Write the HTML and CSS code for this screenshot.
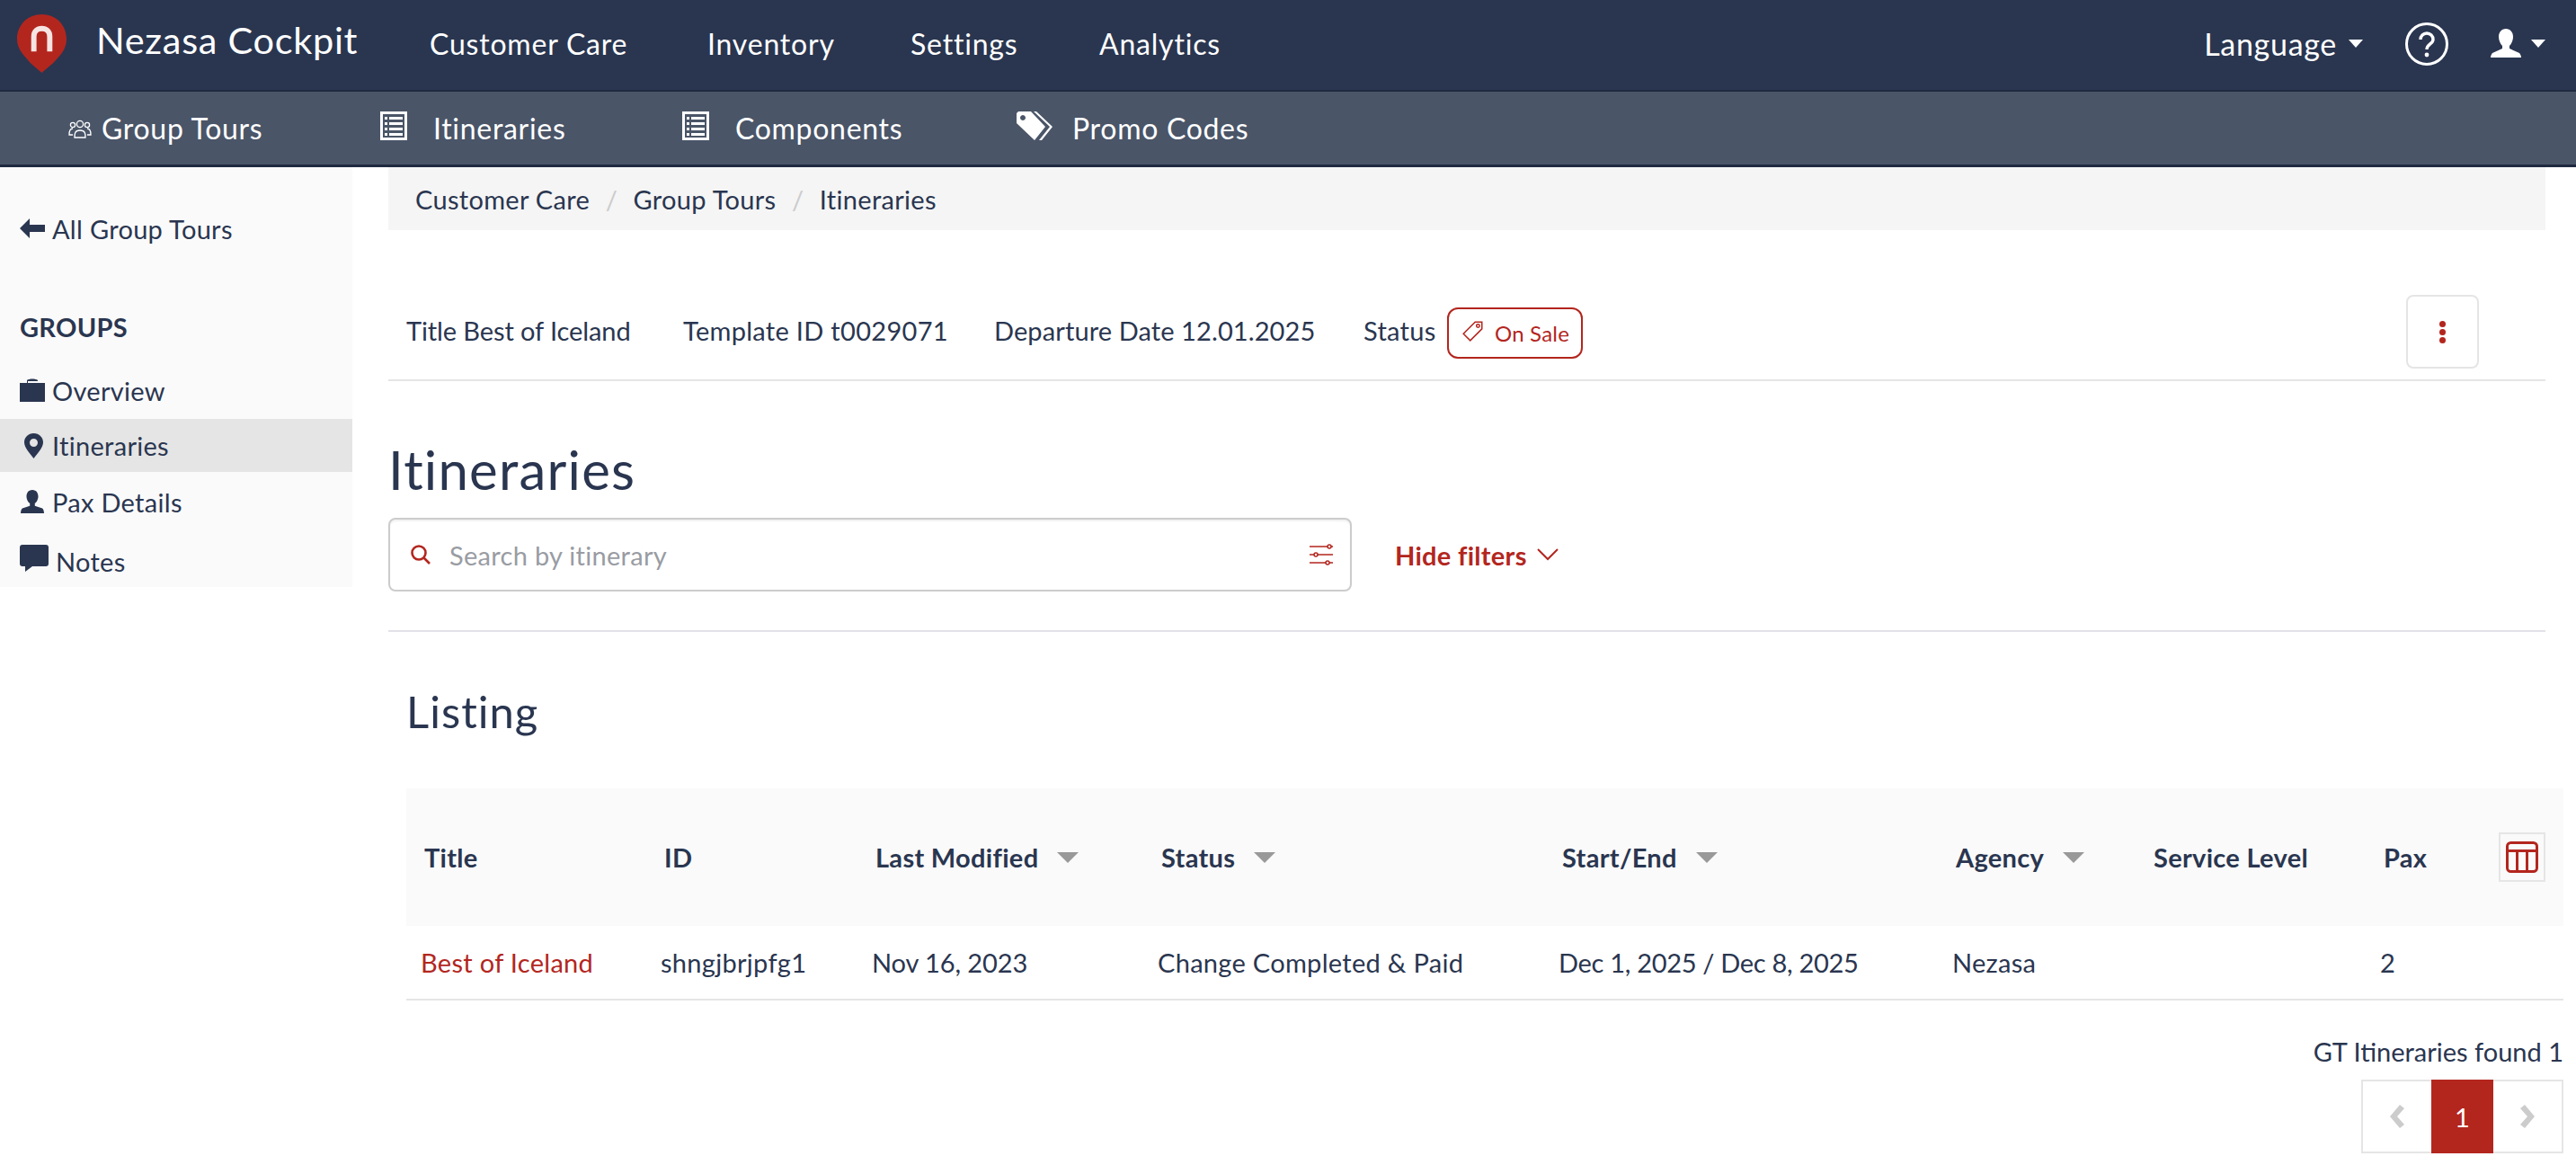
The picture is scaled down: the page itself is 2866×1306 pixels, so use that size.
FILE: index.html
```html
<!DOCTYPE html>
<html lang="en">
<head>
<meta charset="utf-8">
<title>Nezasa Cockpit</title>
<link rel="stylesheet" href="styles.css">
</head>
<body>
<header class="topbar">
  <svg class="logo" viewBox="0 0 58 68"><path d="M29 1C13 1 1 13 1 29c0 13 10 20 15 27l13 11 1-1 12-10c6-7 15-14 15-27C57 13 45 1 29 1z" fill="#b3261e"/><path d="M20 43V26c0-6 4-9 9-9s9 3 9 9v17" fill="none" stroke="#f6e4e2" stroke-width="6"/></svg>
  <span class="brand">Nezasa Cockpit</span>
  <nav class="mainnav">
    <a class="nav-customer">Customer Care</a>
    <a class="nav-inventory">Inventory</a>
    <a class="nav-settings">Settings</a>
    <a class="nav-analytics">Analytics</a>
  </nav>
  <div class="topright">
    <a class="lang">Language<i class="caret"></i></a>
    <svg class="help" viewBox="0 0 48 48"><circle cx="24" cy="24" r="22.5" fill="none" stroke="#fff" stroke-width="3"/><path d="M17 19c0-4 3-7 7-7s7 3 7 7c0 5-7 5-7 11" fill="none" stroke="#fff" stroke-width="3.4"/><circle cx="24" cy="36" r="2.4" fill="#fff"/></svg>
    <svg class="user" viewBox="0 0 34 32"><path d="M17 0c5 0 8 4 8 9 0 4-2 8-4 10v3l11 5c1 1 2 3 2 5H0c0-2 1-4 2-5l11-5v-3c-2-2-4-6-4-10 0-5 3-9 8-9z" fill="#fff"/></svg>
    <i class="caret"></i>
  </div>
</header>
<div class="subbar">
  <a class="sub sub-group"><svg class="ic-group" viewBox="0 0 26 24" fill="none" stroke="#fff" stroke-width="1.3"><circle cx="13" cy="7" r="3.6"/><path d="M7 22c0-4 0-8 6-8s6 4 6 8z"/><circle cx="5" cy="8" r="2.6"/><circle cx="21" cy="8" r="2.6"/><path d="M5 19H1c0-4 1-7 4-7M21 19h4c0-4-1-7-4-7"/></svg>Group Tours</a>
  <a class="sub sub-itin"><svg class="ic-list" viewBox="0 0 30 32"><path fill="#fff" fill-rule="evenodd" d="M0 0h30v32H0zM3 3v26h24V3z"/><path fill="#fff" d="M5 6h3v3H5zM10 6h15v3H10zM5 12h3v3H5zM10 12h15v3H10zM5 18h3v3H5zM10 18h15v3H10zM5 24h3v3H5zM10 24h15v3H10z"/></svg>Itineraries</a>
  <a class="sub sub-comp"><svg class="ic-list" viewBox="0 0 30 32"><path fill="#fff" fill-rule="evenodd" d="M0 0h30v32H0zM3 3v26h24V3z"/><path fill="#fff" d="M5 6h3v3H5zM10 6h15v3H10zM5 12h3v3H5zM10 12h15v3H10zM5 18h3v3H5zM10 18h15v3H10zM5 24h3v3H5zM10 24h15v3H10z"/></svg>Components</a>
  <a class="sub sub-promo"><svg class="ic-tags" viewBox="0 0 41 32"><path fill="#fff" fill-rule="evenodd" d="M2 0h14l16 17-12 15L0 13V2zM7 4a3 3 0 1 0 .01 0z"/><path d="M19 0h3l18 17-12 15h-3l12-15z" fill="#fff"/></svg>Promo Codes</a>
</div>
<div class="page">
  <aside class="sidebar">
    <a class="back"><svg class="ic-side" viewBox="0 0 28 22"><path d="M0 11L11 0v7h17v8H11v7z" fill="#2a3650"/></svg>All Group Tours</a>
    <h4 class="side-title">GROUPS</h4>
    <a class="side-item i-overview"><svg class="ic-side" viewBox="0 0 28 26"><path d="M0 5h8V2c2-2 10-2 12 0v1H9v2h19v21H0z" fill="#2a3650"/></svg>Overview</a>
    <a class="side-item active i-itin"><svg class="ic-pin" viewBox="0 0 21 28"><path fill="#2a3650" fill-rule="evenodd" d="M10.500 0C4.500 0 0 4.500 0 10c0 6 6 12 10.500 18C15 22 21 16 21 10 21 4.500 16.500 0 10.500 0zm0 6a4.500 4.500 0 1 1 0 9 4.500 4.500 0 0 1 0-9z"/></svg>Itineraries</a>
    <a class="side-item i-pax"><svg class="ic-side" viewBox="0 0 28 28"><path d="M14 0c5 0 7 4 7 8 0 3-2 7-4 8v3l9 3c1 1 2 3 2 6H0c0-3 1-5 2-6l9-3v-3c-2-1-4-5-4-8 0-4 2-8 7-8z" fill="#2a3650"/></svg>Pax Details</a>
    <a class="side-item i-notes"><svg class="ic-chat" viewBox="0 0 32 30"><path d="M3 0h26a3 3 0 0 1 3 3v18a3 3 0 0 1-3 3H14l-8 6v-6H3a3 3 0 0 1-3-3V3a3 3 0 0 1 3-3z" fill="#2a3650"/></svg>Notes</a>
  </aside>
  <main class="content">
    <ol class="crumbs">
      <li>Customer Care</li><li class="sep">/</li><li>Group Tours</li><li class="sep">/</li><li>Itineraries</li>
    </ol>
    <div class="tour">
      <span class="m1">Title Best of Iceland</span>
      <span class="m2">Template ID t0029071</span>
      <span class="m3">Departure Date 12.01.2025</span>
      <span class="m4">Status</span>
      <span class="badge"><svg class="ic-tag" viewBox="0 0 24 24" fill="none" stroke="#b3261e" stroke-width="1.4"><path d="M14 3h7v7L9 22l-7-7z"/><circle cx="17" cy="7" r="1.6"/></svg>On Sale</span>
      <button class="more"><i></i><i></i><i></i></button>
    </div>
    <h1 class="title">Itineraries</h1>
    <div class="filters">
      <div class="search">
        <svg class="ic-search" viewBox="0 0 24 24" fill="none" stroke="#b3261e" stroke-width="2.600"><circle cx="10" cy="10" r="7.500"/><path d="M15.500 15.500L22 22"/></svg>
        <span class="placeholder">Search by itinerary</span>
        <svg class="ic-sliders" viewBox="0 0 28 26" fill="none" stroke="#b3261e" stroke-width="1.500"><path d="M1 4h20M25 4h2M1 13h5M10 13h17M1 22h18M23 22h4"/><circle cx="23" cy="4" r="2"/><circle cx="8" cy="13" r="2"/><circle cx="21" cy="22" r="2"/></svg>
      </div>
      <a class="hide">Hide filters<svg class="ic-chev" viewBox="0 0 24 14" fill="none" stroke="#b3261e" stroke-width="2"><path d="M1 1l11 11L23 1"/></svg></a>
    </div>
    <hr class="rule">
    <section class="listing">
      <h2 class="listing-title">Listing</h2>
      <table class="grid">
        <colgroup><col class="c1"><col class="c2"><col class="c3"><col class="c4"><col class="c5"><col class="c6"><col class="c7"><col class="c8"><col class="c9"></colgroup>
        <thead>
          <tr>
            <th>Title</th><th>ID</th>
            <th>Last Modified<i class="sort"></i></th>
            <th>Status<i class="sort"></i></th>
            <th>Start/End<i class="sort"></i></th>
            <th>Agency<i class="sort"></i></th>
            <th>Service Level</th><th>Pax</th>
            <th class="colbtn"><span class="colbox"><svg viewBox="0 0 36 35" fill="none" stroke="#b3261e" stroke-width="3"><rect x="1.500" y="1.500" width="33" height="32" rx="4"/><path d="M2 10.500h32M12.500 10.500v23M23.500 10.500v23"/></svg></span></th>
          </tr>
        </thead>
        <tbody>
          <tr>
            <td><a class="tlink">Best of Iceland</a></td><td>shngjbrjpfg1</td><td class="num">Nov 16, 2023</td><td>Change Completed &amp; Paid</td><td class="dates">Dec 1, 2025 / Dec 8, 2025</td><td>Nezasa</td><td></td><td>2</td><td></td>
          </tr>
        </tbody>
      </table>
      <div class="found">GT Itineraries found 1</div>
      <div class="pager">
        <span class="pg pg-prev"><svg viewBox="0 0 18 28"><path d="M12 1l5 4-8 9 8 9-5 4L1 14z" fill="#ccc"/></svg></span>
        <span class="pg pg-on">1</span>
        <span class="pg pg-next"><svg viewBox="0 0 18 28"><path d="M6 1L1 5l8 9-8 9 5 4 11-13z" fill="#ccc"/></svg></span>
      </div>
    </section>
  </main>
</div>
</body>
</html>
```

FILE: styles.css
```css
* { box-sizing: border-box; }
html, body { margin: 0; padding: 0; }
body {
  font-family: "Lato", "Noto Sans", sans-serif;
  font-size: 29px;
  letter-spacing: .3px;
  color: #2a3650;
  background: #fff;
  height: 1306px;
  overflow: hidden;
}
a { display: inline-flex; align-items: center; }
svg { display: block; flex: none; }
.num { letter-spacing: -.1px; }
.dates { letter-spacing: -.3px; }

.topbar {
  height: 102px;
  background: #2a3650;
  border-bottom: 2px solid #1f2a40;
  color: #fff;
  display: flex;
  align-items: center;
  padding-left: 18px;
}
.logo { width: 57px; height: 67px; margin-top: -4px; }
.brand { font-size: 41.500px; margin-left: 32px; margin-top: -13px; width: 371px; letter-spacing: .7px; white-space: nowrap; }
.mainnav { display: flex; font-size: 32px; letter-spacing: .8px; margin-top: -3px; }
.nav-customer { width: 309px; }
.nav-inventory { width: 226px; }
.nav-settings { width: 210px; }
.topright { margin-left: auto; display: flex; align-items: center; padding-right: 34px; font-size: 34px; letter-spacing: .7px; margin-top: -3px; }
.lang { margin-right: 47px; }
.caret {
  display: inline-block;
  width: 0; height: 0;
  border-left: 8px solid transparent;
  border-right: 8px solid transparent;
  border-top: 9px solid #fff;
  margin-left: 13px;
}
.help { width: 48px; height: 48px; margin-right: 47px; }
.user { width: 34px; height: 32px; margin-top: -2px; }
.topright > .caret { margin-left: 11px; }

.subbar {
  height: 84px;
  background: #4a5568;
  border-bottom: 3px solid #1f2a40;
  color: #fff;
  display: flex;
  align-items: center;
  font-size: 32px;
  letter-spacing: .7px;
}
.sub { white-space: nowrap; }
.sub-group { margin-left: 76px; width: 347px; }
.ic-group { width: 26px; height: 24px; margin-right: 11px; }
.sub-itin { width: 336px; }
.sub-comp { width: 372px; }
.ic-list { width: 30px; height: 32px; margin-right: 29px; margin-top: -6px; }
.ic-tags { width: 41px; height: 32px; margin-right: 21px; margin-top: -6px; }

.page { display: flex; align-items: flex-start; }
.sidebar {
  width: 392px;
  height: 467px;
  background: #fafafa;
  flex: none;
  padding-top: 48px;
}
.back { height: 40px; padding-left: 22px; }
.ic-side { width: 28px; height: 26px; margin-right: 8px; }
.side-title { margin: 70px 0 0 22px; font-size: 29px; line-height: 40px; font-weight: 700; letter-spacing: .3px; }
.side-item { display: flex; align-items: center; height: 59px; padding-left: 22px; }
.i-overview { margin-top: 18px; height: 64px; }
.i-itin { background: #e5e5e5; }
.i-pax { height: 66px; }
.i-notes { height: 66px; }
.ic-pin { width: 21px; height: 28px; margin: 0 10px 0 5px; }
.ic-chat { width: 32px; height: 30px; margin-right: 8px; margin-top: -6px; }

.content { flex: 1; min-width: 0; padding: 0 34px 0 40px; }
.crumbs {
  list-style: none;
  margin: 0;
  height: 70px;
  padding: 0 0 0 30px;
  background: #f5f5f5;
  display: flex;
  align-items: center;
}
.sep { color: #ccc; margin: 0 17.500px; }
.tour {
  height: 168px;
  border-bottom: 2px solid #e5e5e5;
  display: flex;
  align-items: center;
  padding-left: 20px;
  padding-top: 56px;
}
.m1 { width: 308px; white-space: nowrap; letter-spacing: -.1px; }
.m2 { width: 346px; white-space: nowrap; }
.m3 { width: 411px; white-space: nowrap; letter-spacing: .1px; }
.m4 { width: 93px; white-space: nowrap; }
.badge {
  width: 151px;
  height: 57px;
  border: 2px solid #b3261e;
  border-radius: 12px;
  color: #b3261e;
  font-size: 24px;
  letter-spacing: .2px;
  display: flex;
  align-items: center;
  padding-left: 14px;
  margin-top: 6px;
}
.ic-tag { width: 26px; height: 26px; margin-right: 11px; margin-top: -4px; }
.more {
  margin-left: auto;
  margin-right: 74px;
  width: 81px;
  height: 82px;
  background: #fff;
  border: 2px solid #e5e5e5;
  border-radius: 8px;
  display: flex;
  flex-direction: column;
  align-items: center;
  justify-content: center;
  gap: 2px;
  margin-top: 4px;
  padding: 0;
}
.more i { width: 7px; height: 7px; border-radius: 50%; background: #b3261e; }
.title { font-size: 60px; font-weight: 400; letter-spacing: 1.200px; margin: 0; height: 152px; padding-top: 45px; line-height: 106px; }
.filters { display: flex; align-items: center; }
.search {
  width: 1072px;
  height: 82px;
  border: 2px solid #ccc;
  border-radius: 8px;
  box-shadow: inset 0 2px 2px rgba(0,0,0,.06);
  display: flex;
  align-items: center;
  padding: 0 18px 0 22px;
}
.ic-search { width: 24px; height: 24px; margin-right: 20px; }
.placeholder { color: #999ca3; flex: 1; }
.ic-sliders { width: 28px; height: 26px; }
.hide { color: #b3261e; font-weight: 700; margin-left: 48px; }
.ic-chev { width: 24px; height: 14px; margin-left: 11px; }
.rule { border: 0; border-top: 2px solid #e2e2e8; margin: 43px 0 0; }
.listing { margin: 0 -20px 0 20px; }
.listing-title { font-size: 49px; font-weight: 400; letter-spacing: 1px; margin: 0; height: 174px; line-height: 177px; }
.grid { width: 2400px; border-collapse: collapse; table-layout: fixed; }
.c1 { width: 267px; }
.c2 { width: 235px; }
.c3 { width: 318px; }
.c4 { width: 446px; }
.c5 { width: 438px; }
.c6 { width: 220px; }
.c7 { width: 256px; }
.c8 { width: 124px; }
.c9 { width: 96px; }
th {
  height: 153px;
  background: #fafafa;
  text-align: left;
  font-weight: 700;
  padding: 0 0 0 20px;
  white-space: nowrap;
}
td {
  height: 82px;
  border-bottom: 2px solid #e5e5e5;
  padding: 0 0 0 16px;
  white-space: nowrap;
}
.tlink { color: #b3261e; }
.sort {
  display: inline-block;
  width: 0; height: 0;
  border-left: 12px solid transparent;
  border-right: 12px solid transparent;
  border-top: 12px solid #999;
  margin-left: 21px;
  vertical-align: 5px;
}
th.colbtn { padding: 0 0 0 24px; }
.colbox { display: flex; align-items: center; justify-content: center; width: 52px; height: 55px; border: 2px solid #e5e5e5; }
.colbox svg { width: 36px; height: 35px; }
.found { text-align: right; margin-top: 39px; line-height: 36px; letter-spacing: 0; }
.pager { display: flex; justify-content: flex-end; margin-top: 13px; }
.pg { height: 82px; display: flex; align-items: center; justify-content: center; border: 2px solid #e5e5e5; }
.pg svg { width: 18px; height: 28px; }
.pg-prev { width: 78px; border-right: 0; }
.pg-next { width: 78px; border-left: 0; }
.pg-on { width: 69px; background: #b3261e; border-color: #b3261e; color: #fff; }
```
